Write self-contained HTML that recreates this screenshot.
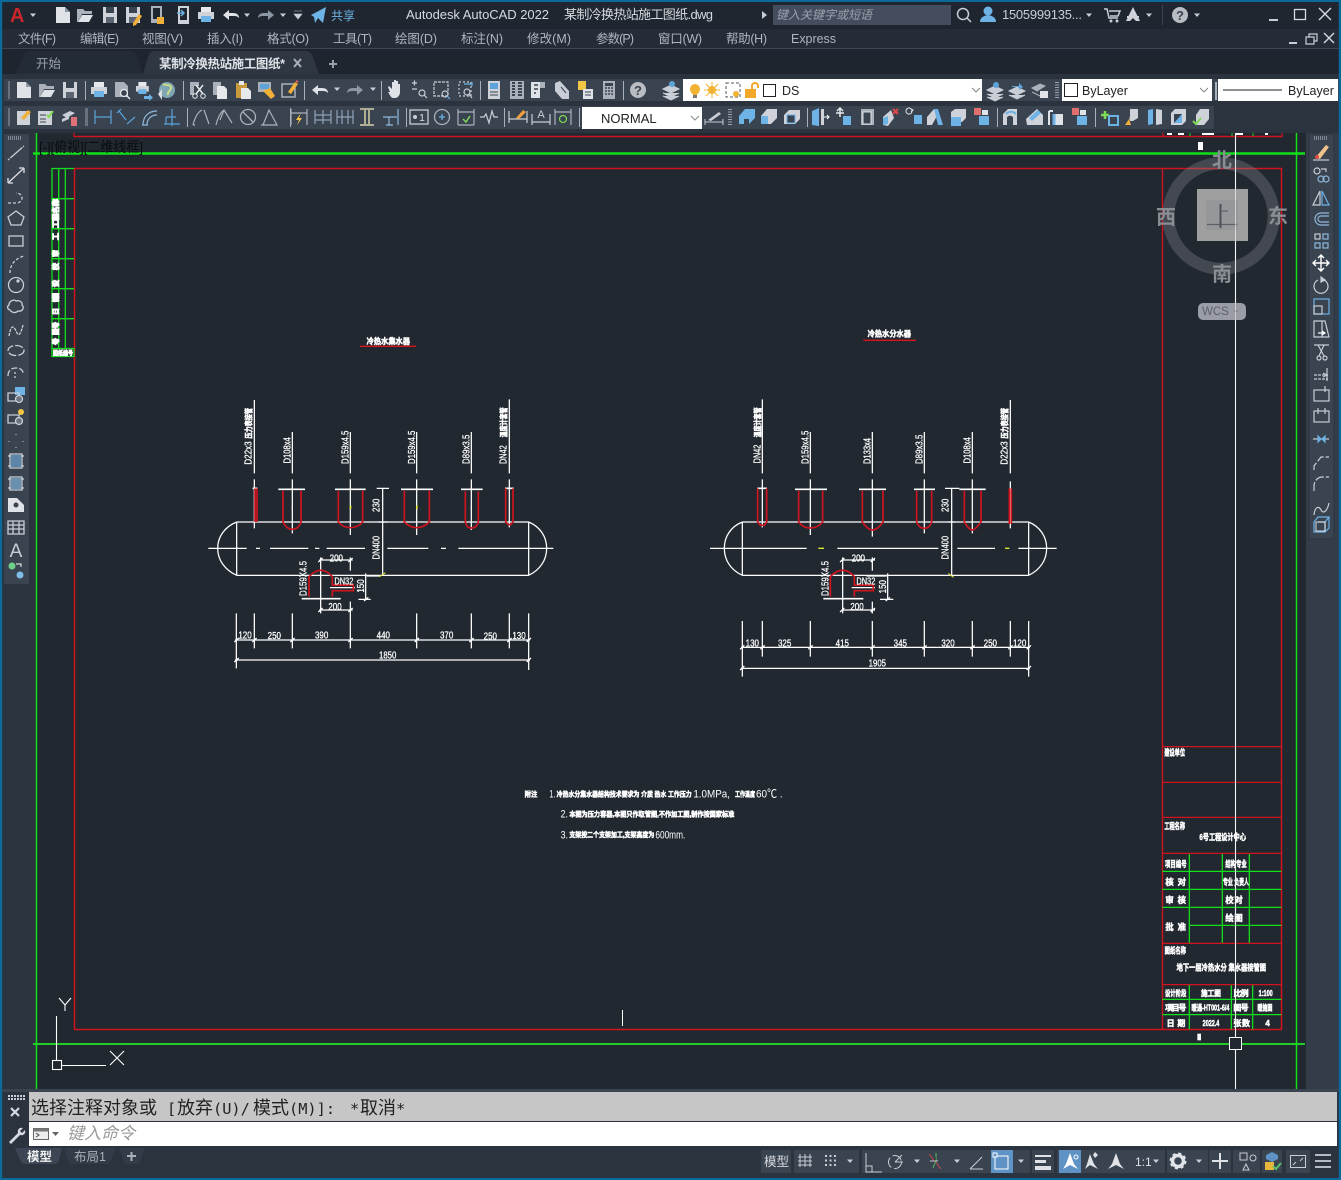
<!DOCTYPE html>
<html lang="zh"><head><meta charset="utf-8"><title>AutoCAD 2022</title>
<style>html,body{margin:0;padding:0;background:#212830;overflow:hidden}svg{display:block;font-family:"Liberation Sans","Noto Sans CJK SC",sans-serif}</style></head>
<body>
<svg xmlns="http://www.w3.org/2000/svg" width="1341" height="1180" viewBox="0 0 1341 1180">
<defs>
<g id="new"><path d="M-7-8h9l5 5v11h-14z" fill="#dfe2e6"/><path d="M2-8l5 5h-5z" fill="#8d96a3"/></g>
<g id="open"><path d="M-8 7V-6h6l2 2h7v3H-3L-7 7z" fill="#aab1bb"/><path d="M-7 7l4-7h11l-4 7z" fill="#dfe2e6"/></g>
<g id="save"><rect x="-7" y="-8" width="14" height="16" fill="#cfd3d9"/><rect x="-4" y="-8" width="8" height="6" fill="#3a4350"/><rect x="-4" y="2" width="8" height="6" fill="#5b6472"/></g>
<g id="saveas"><use href="#save"/><path d="M0 8l6-9 3 2-6 9-3 1z" fill="#f0b03a"/></g>
<g id="print"><rect x="-5" y="-8" width="10" height="5" fill="#e6e8eb"/><rect x="-8" y="-3" width="16" height="7" fill="#cfd3d9"/><rect x="-5" y="1" width="10" height="6" fill="#6db3e6"/></g>
<g id="prev"><path d="M-7-8h9l4 4v11h-13z" fill="#aab1bb"/><circle cx="2" cy="3" r="3.5" fill="#3a4350" stroke="#e6e8eb" stroke-width="1.3"/><path d="M5 6l3 3" stroke="#e6e8eb" stroke-width="1.5"/></g>
<g id="plot"><use href="#print" transform="scale(.8) translate(-2 -2)"/><path d="M0 6h5v-2l4 3.500-4 3.500v-2H0z" fill="#6db3e6"/></g>
<g id="globe"><circle r="8" fill="#7fa7b3"/><path d="M-4-6c4 2 7 0 8 3s-4 4-3 8" stroke="#c8dc8a" stroke-width="2" fill="none"/><path d="M-9 4l4-5v11z" fill="#d9dce0"/></g>
<g id="cut"><path d="M-7-8h9v4h-5v9h-4z" fill="#aab1bb"/><path d="M-1-5l7 9M6-5l-7 9" stroke="#e6e8eb" stroke-width="1.5"/><circle cx="-2" cy="6" r="2.300" fill="none" stroke="#e6e8eb"/><circle cx="6" cy="6" r="2.300" fill="none" stroke="#e6e8eb"/></g>
<g id="copy"><path d="M-7-8h8v13h-8z" fill="#aab1bb"/><path d="M-3-4h7l3 3v10H-3z" fill="#e6e8eb"/></g>
<g id="paste"><rect x="-7" y="-7" width="11" height="15" fill="#c99a3d"/><rect x="-4" y="-9" width="5" height="4" fill="#e6e8eb"/><path d="M-2-2h7l3 3v8H-2z" fill="#e6e8eb"/></g>
<g id="match"><rect x="-8" y="-8" width="13" height="10" fill="#aab1bb"/><rect x="-6" y="-6" width="9" height="5" fill="#5ba3d9"/><path d="M-3 1l7-3 5 8-4 3z" fill="#f0b03a"/></g>
<g id="mprop"><rect x="-8" y="-6" width="13" height="13" fill="none" stroke="#aab1bb" stroke-width="1.500"/><path d="M-2 2l7-10 3 2-7 10z" fill="#f0b03a"/><path d="M6-9l2 1" stroke="#e66" stroke-width="2"/></g>
<g id="undo"><path d="M-8 0l6-5v3h4c4 0 6 2 6 5-2-2-3-2-6-2h-4v4z" fill="#dfe2e6"/></g>
<g id="redo"><path d="M8 0l-6-5v3h-4c-4 0-6 2-6 5 2-2 3-2 6-2h4v4z" fill="#8d96a3"/></g>
<g id="arr"><path d="M-3-1.500h6l-3 3.500z" fill="#c9ced6"/></g>
<g id="hand"><path d="M-5 2l-2-5 1-1 3 3v-7h2v5-7h2v7-6h2v7-4h2v8c0 3-2 6-5 6h-2c-2 0-3-3-5-6z" fill="#dfe2e6"/></g>
<g id="zr" fill="none" stroke="#c9ced6" stroke-width="1.200"><path d="M-7-7h5M-4.500-9.500v5M-7-1h5"/><circle cx="3" cy="3" r="3"/><path d="M5 5l3 3"/></g>
<g id="zw" fill="none" stroke="#c9ced6" stroke-width="1.200"><rect x="-8" y="-8" width="14" height="14" stroke-dasharray="3 1"/><circle cx="3" cy="4" r="3"/><path d="M5 6l3 3" stroke="#6db3e6"/></g>
<g id="zp" fill="none" stroke="#c9ced6" stroke-width="1.200"><rect x="-7" y="-8" width="12" height="14" stroke-dasharray="2 2"/><path d="M-2-6h8M6-8v4" stroke="#6db3e6"/><circle cx="1" cy="2" r="3"/><path d="M3 4l3 4"/></g>
<g id="panel"><rect x="-6" y="-9" width="12" height="18" fill="#cfd3d9"/><rect x="-4" y="-7" width="8" height="6" fill="#5ba3d9"/><path d="M-4 2h8M-4 5h8" stroke="#3a4350"/></g>
<g id="grid"><rect x="-7" y="-9" width="14" height="18" fill="#aab1bb"/><path d="M-5-7h3M-5-4h3M-5-1h3M-5 2h3M-5 5h3M1-7h4M1-4h4M1-1h4M1 2h4M1 5h4" stroke="#3a4350" stroke-width="2"/></g>
<g id="tool"><rect x="-7" y="-8" width="9" height="16" fill="#dfe2e6"/><rect x="2" y="-8" width="5" height="6" fill="#aab1bb"/><path d="M-4-5h4M-4-1h4M-4 3h2" stroke="#3a4350" stroke-width="1.500"/></g>
<g id="sheet"><path d="M-7-7l5-2 9 10v8H0L-7 1z" fill="#c9ced6"/><path d="M-1-3l5 6" stroke="#3a4350"/></g>
<g id="mark"><rect x="-7" y="-9" width="8" height="9" fill="#f2c544"/><rect x="-2" y="-1" width="10" height="10" fill="#dfe2e6"/><path d="M0 2h6M0 5h6" stroke="#3a4350"/></g>
<g id="calc"><rect x="-6" y="-9" width="12" height="18" fill="#aab1bb"/><rect x="-4" y="-7" width="8" height="3" fill="#3a4350"/><path d="M-4-2h8M-4 1h8M-4 4h8" stroke="#3a4350" stroke-width="1.500" stroke-dasharray="2 1"/></g>
<g id="help"><circle r="8" fill="#b9bdc3"/><text y="5" text-anchor="middle" font-size="13" font-weight="700" fill="#3a4350">?</text></g>
<g id="layers"><path d="M-8-1l8-4 8 4-8 4zM-8 3l8 4 8-4M-8 6l8 4 8-4" fill="#c9ced6" stroke="#c9ced6"/><circle cx="1" cy="-6" r="3" fill="#5ba3d9"/></g>
<g id="layer2"><path d="M-8 0l8-4 8 4-8 4zM-8 4l8 4 8-4" fill="#c9ced6" stroke="#c9ced6"/><path d="M-5-5h7v-3l4 4-4 3v-3h-7" fill="#5ba3d9"/></g>
<g id="layer3"><path d="M-8-2l8-4 5 2-8 5zM-8 2l8 4" fill="#aab1bb" stroke="#aab1bb"/><rect x="0" y="1" width="8" height="7" fill="#dfe2e6"/></g>
<g id="d1"><path d="M-7-6h10l3 3v11H-7z" fill="#cfd3d9"/><path d="M-3 1l7-8 3 2-7 8z" fill="#f0b03a"/></g>
<g id="d2"><path d="M-8-6h14v14H-8z" fill="#cfd3d9"/><path d="M-6-2h6M-6 2h6M-6 5h6" stroke="#3a4350"/><path d="M1-2l2 2 4-6" stroke="#7ed957" stroke-width="2" fill="none"/></g>
<g id="d3"><path d="M-8-2l8-4 5 2-8 5zM-8 2l7-3v3l-7 3z" fill="#c9ced6"/><rect x="1" y="0" width="6" height="9" fill="#e0707a"/></g>
<g id="h1" fill="none" stroke="#5ba3d9" stroke-width="1.200"><path d="M-8-7V7M8-7V7M-8 0H8"/></g>
<g id="h2" fill="none" stroke="#5ba3d9" stroke-width="1.200"><path d="M-8-6L-1 3M0 7l8-7M-6-8l-4 4"/></g>
<g id="h3" fill="none" stroke="#8fb9dc" stroke-width="1.200"><path d="M-7 8c0-8 5-14 14-14M-3 8c0-6 4-10 10-10"/><path d="M-8 8h6"/></g>
<g id="h4" fill="none" stroke="#5ba3d9" stroke-width="1.200"><path d="M-8 7H8M0-8V9M-6 0H4M-6 0V7"/></g>
<g id="a1" fill="none" stroke="#aab1bb" stroke-width="1.200"><path d="M-8 8C-6 0-3-5 1-7M-8 8h2M3-7l5 14"/></g>
<g id="a2" fill="none" stroke="#aab1bb" stroke-width="1.200"><path d="M-8 8C-6 0-3-5 0-7L8 6M0-7l-4 10"/></g>
<g id="a3" fill="none" stroke="#aab1bb" stroke-width="1.300"><circle r="7.500"/><path d="M-5-5L5 5"/></g>
<g id="a4" fill="none" stroke="#aab1bb" stroke-width="1.200"><path d="M-8 8H8L0-7-6 8"/></g>
<g id="b1" fill="none" stroke="#aab1bb" stroke-width="1.200"><path d="M-8-8V8M8-8V8M-8-4H8"/><path d="M2-4L-3 3h3l-2 5 5-7H0z" fill="#f2c544" stroke="none"/></g>
<g id="b2" fill="none" stroke="#8fa3b9" stroke-width="1.200"><path d="M-8-7V7M0-7V7M8-7V7M-8-2H8M-8 3H8"/></g>
<g id="b3" fill="none" stroke="#8fa3b9" stroke-width="1.200"><path d="M-8-7V7M-3-7V7M3-7V7M8-7V7M-8 0H8"/></g>
<g id="b4" fill="none" stroke="#d8d2a8" stroke-width="1.500"><path d="M-7-8H7M-7 8H7M-2-7V7M2-7V7"/></g>
<g id="b5" fill="none" stroke="#8fb9dc" stroke-width="1.200"><path d="M-8 0H6M7-8V8M-2 0v8M-5 8H2"/></g>
<g id="t1"><rect x="-9" y="-7" width="18" height="14" fill="none" stroke="#c9ced6" stroke-width="1.300"/><text x="3" y="4" font-size="10" fill="#dfe2e6" text-anchor="middle">1</text><circle cx="-4" cy="0" r="2" fill="#c9ced6"/></g>
<g id="t2" fill="none" stroke="#aab1bb" stroke-width="1.300"><circle r="7.500"/><path d="M-3 0h6M0-3v6" stroke="#6db3e6"/></g>
<g id="t3" fill="none" stroke="#aab1bb" stroke-width="1.200"><path d="M-8-8V8M8-8V8M-8-5H8M-8 8H8"/><path d="M-3 2l3 3 4-6" stroke="#7ed957" stroke-width="1.500"/></g>
<g id="t4" fill="none" stroke="#c9ced6" stroke-width="1.200"><path d="M-9 0h4l2-3 3 9 3-12 2 6h4"/></g>
<g id="u1" fill="none" stroke="#c9ced6" stroke-width="1.200"><path d="M-9-6V6M9-6V6M-9 2H9"/><path d="M-2 1l7-8 3 2-7 7z" fill="#f0a03a" stroke="none"/></g>
<g id="u2" fill="none" stroke="#c9ced6" stroke-width="1.200"><path d="M-9-3V8M9-3V8M-9 5H9"/><text x="0" y="1" font-size="11" stroke="none" fill="#c9ced6" text-anchor="middle">A</text></g>
<g id="u3" fill="none" stroke="#aab1bb" stroke-width="1.200"><path d="M-8-8V8M8-8V8M-8-5H8"/><circle cy="2" r="3.500" stroke="#7ed957"/></g>
<g id="dimed"><path d="M-9 1V7M9 1V7M-9 4H9" stroke="#c9ced6" fill="none"/><path d="M-6 2L5-6l2 2L-3 3z" fill="#c9ced6"/></g>
<g id="c1"><path d="M-8 7V-1l6-7h10v9l-6 6z" fill="#6db3e6"/><path d="M-3 7V2h5v5z" fill="#3a4350"/></g>
<g id="c2"><path d="M-8 7V-1l6-7h10v9l-6 6z" fill="#cfd3d9"/><path d="M-8 7V-1h7v8z" fill="#6db3e6"/></g>
<g id="c3"><path d="M-8 7V-2l5-5H8V2L3 7z" fill="#cfd3d9"/><rect x="-5" y="-2" width="8" height="8" fill="#3a4350" stroke="#6db3e6"/></g>
<g id="e1"><path d="M-8 8V-6l7-3V9z" fill="#6db3e6"/><path d="M1-8h3v16H1z" fill="#cfd3d9"/><path d="M4 0h5M7-2l2 2-2 2" stroke="#fff" fill="none"/></g>
<g id="e2"><path d="M-7-4H1M-3-8V0M-6-6l3-3 3 3" stroke="#e6e8eb" fill="none" stroke-width="1.500"/><rect x="0" y="-1" width="8" height="9" fill="#6db3e6"/></g>
<g id="e3"><rect x="-6" y="-8" width="13" height="16" fill="#aab1bb"/><rect x="-4" y="-5" width="8" height="12" fill="#3a4350" stroke="#dfe2e6"/></g>
<g id="e4"><path d="M-7 8V0l8-7 3 8-6 8z" fill="#cfd3d9"/><path d="M-7 8V1l5-2v8z" fill="#6db3e6"/><path d="M3-8l5 5M8-8l-5 5" stroke="#e04848" stroke-width="2"/></g>
<g id="e5"><path d="M-8-6a3 3 0 1 1 0 .1M-3-8l2 1-2 2" stroke="#dfe2e6" fill="none"/><rect x="0" y="-2" width="8" height="9" fill="#6db3e6"/></g>
<g id="e6"><path d="M-8 8V0l7-8 4 5-6 11z" fill="#cfd3d9"/><path d="M-1-8l4 0 5 16H3z" fill="#6db3e6"/></g>
<g id="e7"><path d="M-8 4V-5l4-3h11v9l-4 4z" fill="#cfd3d9"/><path d="M-8 9V0h10v9z" fill="#6db3e6"/></g>
<g id="e8"><rect x="-8" y="-9" width="7" height="7" fill="#e07070"/><rect x="0" y="-7" width="6" height="5" fill="#dfe2e6"/><rect x="-3" y="-1" width="10" height="9" fill="#6db3e6"/></g>
<g id="f1"><path d="M-7 8V-3l5-5h9V8H3V1c0-3-6-3-6 0v7z" fill="#cfd3d9"/><path d="M-4-3c3-3 7-3 10 0" stroke="#6db3e6" fill="none" stroke-width="2"/></g>
<g id="f2"><path d="M-8 2L3-8l6 6V8H-7z" fill="#cfd3d9"/><path d="M-5 1L4-7l3 3-9 8z" fill="#6db3e6"/></g>
<g id="f3"><path d="M-3-3h9v11h-9z" fill="#dfe2e6"/><path d="M-8 8V-6M-8-6h4" stroke="#dfe2e6" stroke-width="2" fill="none"/><path d="M-3-3v11" stroke="#6db3e6" stroke-width="3"/></g>
<g id="g1"><path d="M-8-8V0M-12-4h8" stroke="#7ed957" stroke-width="2.500" transform="translate(2 2)"/><rect x="-2" y="-1" width="9" height="9" fill="#3a4350" stroke="#6db3e6" stroke-width="2"/></g>
<g id="g2"><path d="M-1-8h8v9L2 4H-1z" fill="#cfd3d9"/><path d="M-2 2l-4 6h6z" fill="#f0b03a"/><path d="M-1 0v3" stroke="#c9ced6"/></g>
<g id="g3"><path d="M-7-7l5-1v15l-5 1z" fill="#6db3e6"/><path d="M1-8l6 1v14l-6 1z" fill="#cfd3d9"/></g>
<g id="g4"><path d="M-7-4l4-4H8V4L4 8H-7z" fill="#cfd3d9"/><rect x="-4" y="-3" width="8" height="9" fill="#3a4350"/><path d="M-4 6l8-9v9z" fill="#6db3e6"/></g>
<g id="g5"><path d="M-5-2l4-6H8V2L3 8H-5z" fill="#cfd3d9"/><path d="M-8 4l3 3 5-6" stroke="#7ed957" stroke-width="2" fill="none"/></g>
<g id="gr"><path d="M0-8v16" stroke="#9aa3af" stroke-width="2" stroke-dasharray="1 1.500"/><path d="M2-8v16" stroke="#9aa3af" stroke-width="2" stroke-dasharray="1 1.500"/></g>
</defs>

<rect width="1341" height="1180" fill="#212830"/>
<!-- chrome -->
<rect width="1341" height="29" fill="#1f2630"/>
<rect y="29" width="1341" height="19" fill="#252c37"/>
<rect y="48" width="1341" height="1" fill="#3d4552"/>
<rect y="49" width="1341" height="26" fill="#1e252e"/>
<path d="M16 74l8-20q2-3 6-3h100q5 0 7 4l6 19z" fill="#232b36"/>
<path d="M143 74l6-20q2-3 6-3h150q5 0 7 4l7 19z" fill="#2f3743"/>
<rect y="74" width="1341" height="59" fill="#2b333f"/>
<text x="36" y="68" font-size="12.500" fill="#9aa1ab">开始</text>
<text x="159" y="68" font-size="12.500" font-weight="700" fill="#dfe2e6" textLength="126">某制冷换热站施工图纸*</text>
<path d="M294 59l7 8M301 59l-7 8" stroke="#aab1bb" stroke-width="2"/>
<path d="M329 64h8M333 60v8" stroke="#9aa1ab" stroke-width="2"/>
<!-- title -->
<text x="10" y="22" font-size="20" font-weight="700" fill="#c8262a">A</text>
<use href="#arr" x="33" y="15"/>
<use href="#new" x="63" y="15"/><use href="#open" x="85" y="15"/><use href="#save" x="110" y="15"/><use href="#saveas" x="133" y="15"/>
<g transform="translate(157 15)"><rect x="-6" y="-9" width="11" height="17" fill="#aab1bb"/><rect x="-4" y="-7" width="7" height="11" fill="#1f2630"/><rect x="0" y="2" width="7" height="7" fill="#f0b03a"/></g>
<g transform="translate(183 15)"><rect x="-5" y="-9" width="11" height="18" fill="#cfd3d9"/><rect x="-3" y="-7" width="7" height="12" fill="#1f2630"/><path d="M-6-2h6M-2-5l3 3-3 3" stroke="#6db3e6" fill="none" stroke-width="1.500"/></g>
<use href="#print" x="206" y="15"/><use href="#undo" x="231" y="15"/><use href="#arr" x="247" y="15"/><use href="#redo" x="266" y="15"/><use href="#arr" x="283" y="15"/>
<path d="M294 11h8M294 14h8l-4 5z" fill="#c9ced6" stroke="#c9ced6" stroke-width=".6"/>
<path d="M311 15L326 7l-3 16-5-5-3 5-1-6z" fill="#6db3e6"/>
<text x="331" y="20" font-size="12" fill="#6db3e6">共享</text>
<text x="406" y="19" font-size="13" fill="#d6d9de" textLength="143">Autodesk AutoCAD 2022</text>
<text x="564" y="19" font-size="13" fill="#d6d9de" textLength="149">某制冷换热站施工图纸.dwg</text>
<path d="M762 11l5 4-5 4z" fill="#c9ced6"/>
<rect x="773" y="5" width="178" height="20" fill="#434d5e"/>
<text x="776" y="19" font-size="12" font-style="italic" fill="#9aa1ab">键入关键字或短语</text>
<circle cx="963" cy="14" r="5.500" fill="none" stroke="#c9ced6" stroke-width="1.500"/><path d="M967 18l4 4" stroke="#c9ced6" stroke-width="1.500"/>
<circle cx="988" cy="11" r="4.500" fill="#6db3e6"/><path d="M980 22c0-9 16-9 16 0z" fill="#6db3e6"/>
<text x="1002" y="19" font-size="13" fill="#c9ced6" textLength="80">1505999135...</text>
<use href="#arr" x="1089" y="15"/>
<path d="M1104 9h3l2 9h9M1109 11h11l-2 5h-8" stroke="#c9ced6" fill="none" stroke-width="1.500"/><circle cx="1111" cy="21" r="1.500" fill="#c9ced6"/><circle cx="1117" cy="21" r="1.500" fill="#c9ced6"/>
<path d="M1133 7l7 14h-4l-3-3-3 3h-4z" fill="#cfd3d9"/><path d="M1127 17h12" stroke="#cfd3d9" stroke-width="2"/>
<use href="#arr" x="1149" y="15"/><rect x="1162" y="5" width="1" height="20" fill="#3d4552"/>
<use href="#help" x="1180" y="15"/><use href="#arr" x="1197" y="15"/>
<path d="M1269 20h9" stroke="#c9ced6" stroke-width="2"/><rect x="1294.500" y="9.500" width="11" height="10" fill="none" stroke="#d6d9de" stroke-width="1.300"/><path d="M1319 8l12 12M1331 8l-12 12" stroke="#d6d9de" stroke-width="1.400"/>
<!-- menu -->
<g font-size="12.500" fill="#b0b6bf">
<text x="18" y="43" textLength="38">文件(F)</text><text x="80" y="43" textLength="39">编辑(E)</text><text x="142" y="43" textLength="41">视图(V)</text><text x="207" y="43" textLength="36">插入(I)</text><text x="267" y="43" textLength="42">格式(O)</text><text x="333" y="43" textLength="39">工具(T)</text><text x="395" y="43" textLength="42">绘图(D)</text><text x="461" y="43" textLength="42">标注(N)</text><text x="527" y="43" textLength="44">修改(M)</text><text x="596" y="43" textLength="38">参数(P)</text><text x="658" y="43" textLength="44">窗口(W)</text><text x="726" y="43" textLength="41">帮助(H)</text><text x="791" y="43" textLength="45">Express</text></g>
<path d="M1289 43h8" stroke="#c9ced6" stroke-width="2"/><path d="M1306 37h8v7h-8zM1309 37v-3h8v7h-3" fill="none" stroke="#c9ced6" stroke-width="1.200"/><path d="M1324 33l10 10M1334 33l-10 10" stroke="#d6d9de" stroke-width="1.400"/>
<!-- toolbars -->
<rect x="4" y="79" width="1335" height="22" fill="#3a4350"/>
<rect x="4" y="106" width="1210" height="23" fill="#3a4350"/>
<rect x="8" y="81" width="2" height="18" fill="#7c8592" opacity=".7"/>
<rect x="8" y="108" width="2" height="18" fill="#7c8592" opacity=".7"/>
<rect x="85" y="108" width="3" height="18" fill="#7c8592" opacity=".7"/>
<g fill="#aab1bb"><rect x="85" y="81" width="1" height="19"/><rect x="183" y="81" width="1" height="19"/><rect x="304" y="81" width="1" height="19"/><rect x="381" y="81" width="1" height="19"/><rect x="480" y="81" width="1" height="19"/><rect x="623" y="81" width="1" height="19"/><rect x="187" y="108" width="1" height="19"/><rect x="290" y="108" width="1" height="19"/><rect x="406" y="108" width="1" height="19"/><rect x="504" y="108" width="1" height="19"/><rect x="579" y="108" width="1" height="19"/><rect x="807" y="108" width="1" height="19"/><rect x="997" y="108" width="1" height="19"/><rect x="1095" y="108" width="1" height="19"/><rect x="1215" y="82" width="2" height="18"/></g>
<use href="#new" x="24" y="90"/><use href="#open" x="47" y="90"/><use href="#save" x="70" y="90"/><use href="#print" x="99" y="90"/><use href="#prev" x="122" y="90"/><use href="#plot" x="144" y="90"/><use href="#globe" x="167" y="90"/><use href="#cut" x="197" y="90"/><use href="#copy" x="220" y="90"/><use href="#paste" x="243" y="90"/><use href="#match" x="266" y="90"/><use href="#mprop" x="290" y="90"/><use href="#undo" x="320" y="90"/><use href="#arr" x="337" y="89"/><use href="#redo" x="355" y="90"/><use href="#arr" x="373" y="89"/><use href="#hand" x="395" y="90"/><use href="#zr" x="419" y="90"/><use href="#zw" x="442" y="90"/><use href="#zp" x="466" y="90"/><use href="#panel" x="494" y="90"/><use href="#grid" x="517" y="90"/><use href="#tool" x="538" y="90"/><use href="#sheet" x="562" y="90"/><use href="#mark" x="585" y="90"/><use href="#calc" x="609" y="90"/><use href="#help" x="638" y="90"/><use href="#layers" x="671" y="90"/>
<rect x="683" y="79" width="299" height="22" fill="#fff"/>
<path d="M690 89a5 5 0 1 1 10 0c0 3-2 4-3 6h-4c-1-2-3-3-3-6z" fill="#f2b233"/><rect x="693" y="95" width="4" height="3" fill="#777"/>
<circle cx="712" cy="90" r="4" fill="#f2b233"/><path d="M712 82v16M704 90h16M706 84l12 12M718 84l-12 12" stroke="#f2b233"/>
<rect x="726" y="83" width="14" height="14" fill="none" stroke="#556" stroke-dasharray="3 2"/><circle cx="736" cy="94" r="3" fill="#f2b233"/>
<rect x="745" y="89" width="11" height="9" fill="#f2a62a"/><path d="M752 89v-3a3 3 0 0 1 6 0v2" fill="none" stroke="#f2a62a" stroke-width="2"/>
<rect x="763.500" y="84.500" width="12" height="12" fill="#fff" stroke="#222"/>
<text x="782" y="95" font-size="12.500" fill="#222">DS</text>
<path d="M972 88l4 4 4-4" fill="none" stroke="#888"/>
<use href="#layers" x="995" y="91"/><use href="#layer2" x="1017" y="91"/><use href="#layer3" x="1040" y="90"/>
<use href="#gr" x="1056" y="90"/>
<rect x="1062" y="79" width="150" height="22" fill="#fff"/><rect x="1064.500" y="83.500" width="13" height="13" fill="#fff" stroke="#222"/>
<text x="1082" y="95" font-size="12.500" fill="#222">ByLayer</text><path d="M1200 88l4 4 4-4" fill="none" stroke="#888"/>
<rect x="1218" y="79" width="120" height="22" fill="#fff"/><path d="M1223 90h59" stroke="#222"/><text x="1288" y="95" font-size="12.500" fill="#222">ByLayer</text>
<!-- row 2 -->
<use href="#d1" x="24" y="117"/><use href="#d2" x="46" y="117"/><use href="#d3" x="70" y="117"/>
<use href="#h1" x="103" y="117"/><use href="#h2" x="127" y="117"/><use href="#h3" x="150" y="117"/><use href="#h4" x="172" y="117"/>
<use href="#a1" x="201" y="117"/><use href="#a2" x="224" y="117"/><use href="#a3" x="248" y="117"/><use href="#a4" x="269" y="117"/>
<use href="#b1" x="299" y="117"/><use href="#b2" x="323" y="117"/><use href="#b3" x="345" y="117"/><use href="#b4" x="367" y="117"/><use href="#b5" x="391" y="117"/>
<use href="#t1" x="419" y="117"/><use href="#t2" x="442" y="117"/><use href="#t3" x="466" y="117"/><use href="#t4" x="489" y="117"/>
<use href="#u1" x="518" y="117"/><use href="#u2" x="541" y="117"/><use href="#u3" x="563" y="117"/>
<rect x="582" y="107" width="120" height="22" fill="#fff"/><text x="601" y="123" font-size="13" fill="#222">NORMAL</text><path d="M691 116l4 4 4-4" fill="none" stroke="#888"/>
<use href="#dimed" x="714" y="118"/><use href="#gr" x="729" y="117"/>
<use href="#c1" x="747" y="117"/><use href="#c2" x="769" y="117"/><use href="#c3" x="792" y="117"/>
<use href="#e1" x="820" y="117"/><use href="#e2" x="843" y="117"/><use href="#e3" x="867" y="117"/><use href="#e4" x="890" y="117"/><use href="#e5" x="914" y="117"/><use href="#e6" x="935" y="117"/><use href="#e7" x="959" y="117"/><use href="#e8" x="982" y="117"/>
<use href="#f1" x="1010" y="117"/><use href="#f2" x="1034" y="117"/><use href="#f3" x="1057" y="117"/><use href="#e8" x="1080" y="117"/>
<use href="#g1" x="1111" y="117"/><use href="#g2" x="1131" y="117"/><use href="#g3" x="1155" y="117"/><use href="#g4" x="1178" y="117"/><use href="#g5" x="1201" y="117"/>

<!-- side panels -->
<rect x="0" y="133" width="36" height="957" fill="#2b333f"/>
<rect x="1306" y="133" width="35" height="957" fill="#333c49"/>
<rect x="4" y="134" width="25" height="450" fill="#3a4350"/>
<rect x="1309" y="134" width="25" height="405" fill="#3a4350" stroke="#2b333f"/>
<path d="M8 137h13M8 139h13M1314 137h13M1314 139h13" stroke="#c9ced6" stroke-dasharray="1 1"/>
<!-- left tools -->
<g fill="none" stroke="#c9ced6" stroke-width="1.300" transform="translate(16 0)">
<path d="M-8 160L8 146" stroke-dasharray="2 1 16 1 2 20"/><path d="M-7 182L7 169M-8 183h5M-8 183v-5M8 168h-5M8 168v5" stroke="#dfe2e6"/>
<path d="M-8 203h8c8 0 8-10 0-10" stroke-dasharray="3 2"/>
<path d="M0 211l8 6-3 8h-10l-3-8z"/><rect x="-7" y="236" width="14" height="10"/>
<path d="M-6 273C-6 264 0 258 8 256" stroke-dasharray="3 2"/>
<circle cy="285" r="7.500"/><circle cx="2" cy="281" r="1" fill="#c9ced6"/>
<path d="M-7 305c0-4 5-6 7-4 3-1 7 1 6 4 3 3 0 7-4 6-3 3-7 1-8-1-3-1-3-4-1-5z"/>
<path d="M-7 336c2-12 5-10 7-5s4 6 7-6" stroke-dasharray="3 1"/>
<ellipse cy="350.500" rx="8" ry="5" stroke-dasharray="8 2"/><path d="M-8 376c0-6 4-8 8-8s7 2 7 5" stroke-dasharray="6 2"/><path d="M-1 372v8" stroke-dasharray="2 2"/>
<rect x="-7" y="395" width="10" height="8" fill="#6db3e6" stroke="none" transform="translate(6 -8)"/><path d="M-8 393h11v8h-11z"/><circle cx="3" cy="399" r="3.500" fill="#6c7582"/>
<path d="M-8 415h11v8h-11z"/><circle cx="3" cy="421" r="3.500" fill="#6c7582"/><circle cx="5" cy="412" r="3" fill="#f2c544" stroke="none"/>
<path d="M0 434v.5M-7 441v.5M7 441v.5M0 447v.5" stroke-width="2"/>
<path d="M-6 454h12v14h-12zM-8 456h16M-8 466h16" /><rect x="-5" y="455" width="10" height="12" fill="#5d87a8" stroke="none"/>
<path d="M-6 477h12v13h-12zM-8 479h16M-8 488h16"/><rect x="-5" y="478" width="10" height="11" fill="#6a90b0" stroke="none"/>
<path d="M-8 498h9l7 7v7h-16z" fill="#dfe2e6" stroke="none"/><circle cy="505" r="2.500" fill="#3a4350" stroke="none"/>
<path d="M-8 521h16v13h-16zM-8 525h16M-8 529h16M-3 521v13M3 521v13" /></g>
<text x="16" y="557" text-anchor="middle" font-size="19" fill="#c9ced6">A</text>
<circle cx="12" cy="566" r="3.500" fill="#6fd08a"/><circle cx="20" cy="575" r="3.500" fill="#7fbde8"/><path d="M16 564h5v3" stroke="#fff" fill="none"/>
<!-- right tools -->
<g fill="none" stroke="#c9ced6" stroke-width="1.200" transform="translate(1321 0)">
<path d="M-6 158L5 145l3 2-9 12z" fill="#f2c28b" stroke="none"/><circle cx="-4" cy="157" r="2" fill="#e04848" stroke="none"/><path d="M-8 160H8"/>
<circle cx="-4" cy="171" r="3"/><path d="M0 169h5v3"/><circle cx="0" cy="179" r="3" stroke="#8fb9dc"/><circle cx="5" cy="179" r="3" stroke="#8fb9dc"/>
<path d="M-1 191v14h-7z"/><path d="M1 191v14h7z" stroke="#6db3e6"/>
<path d="M8 213h-8a6 6 0 0 0 0 12h8M8 216h-8a3 3 0 0 0 0 6h8" stroke="#8fb9dc"/>
<rect x="-6" y="234" width="5" height="5"/><rect x="2" y="234" width="5" height="5" stroke="#8fb9dc"/><rect x="-6" y="243" width="5" height="5" stroke="#8fb9dc"/><rect x="2" y="243" width="5" height="5" stroke="#8fb9dc"/>
<path d="M-7 263H7M0 256v14M-3 258l3-3 3 3M-3 268l3 3 3-3M-5 260l-3 3 3 3M5 260l3 3-3 3" stroke="#fff" stroke-width="1.400"/>
<path d="M3 280a7 7 0 1 1-6 0" /><path d="M0 277l4 3-4 2z" fill="#c9ced6"/>
<rect x="-7" y="299" width="15" height="15" stroke="#6db3e6"/><rect x="-7" y="306" width="8" height="8"/>
<path d="M-7 321H1V337H-7zM1 321h3l4 16H1" /><path d="M-3 333h6M1 331l3 2-3 2" stroke="#fff"/>
<path d="M-7 345H8M-3 345l6 11M3 345l-5 11" /><circle cx="-2" cy="358" r="2"/><circle cx="4" cy="358" r="2"/>
<path d="M-7 375H7M-7 379H7" stroke-dasharray="3 1"/><path d="M6 368v13M2 373l4 2-4 2"/>
<rect x="-7" y="390" width="15" height="11"/><path d="M4 386v6" /><rect x="-7" y="411" width="15" height="11"/><path d="M-3 408v6M4 408v6"/>
<path d="M-8 439H8" /><path d="M-3 436l3 3-3 3zM4 436l-3 3 3 3z" fill="#6db3e6" stroke="#6db3e6"/>
<path d="M-7 470v-4l7-9h8" stroke-dasharray="8 2"/><path d="M-7 491v-5c0-5 4-9 8-9h7" stroke-dasharray="9 2"/>
<path d="M-7 515c1-9 5-9 7-5s6 2 8-7"/>
<path d="M-7 522l4-5H8v11l-4 4H-7zM-3 522h7v10M4 522l4-5" stroke="#6db3e6"/><rect x="-5" y="522" width="9" height="9" stroke="#fff" stroke-width=".8"/></g>

<!-- DRAWING -->
<g fill="none">
<path d="M74 136.500H1282" stroke="#d0141e" stroke-width="1.400"/><path d="M74 133v4M1163 133v4M1282 133v4" stroke="#d0141e" stroke-width="1.300"/>
<path d="M1190 133v3M1232 133v3M1253 133v3" stroke="#14d81e"/>
<rect x="74.500" y="168.500" width="1207" height="861" stroke="#d0141e" stroke-width="1.500"/>
<path d="M1162.500 168V1029" stroke="#d0141e" stroke-width="1.400"/>
<path d="M33 153.500H1305" stroke="#10e01a" stroke-width="2.600"/>
<path d="M33 1044H1305" stroke="#22cc2a" stroke-width="1.900"/>
<path d="M36.500 133V1089" stroke="#14e01e" stroke-width="1.500"/>
<path d="M1296.500 133V1089" stroke="#14e01e" stroke-width="1.500"/>
</g>
<g fill="#fff"><rect x="1167" y="133" width="5" height="2"/><rect x="1178" y="133" width="6" height="2"/><rect x="1202" y="133" width="12" height="2"/><rect x="1235" y="133" width="8" height="2"/><rect x="1265" y="133" width="3" height="2"/><rect x="1198" y="142" width="5" height="8"/></g>
<text x="39" y="152" font-size="14" fill="#0a0d10" textLength="104" lengthAdjust="spacingAndGlyphs">[-][俯视][二维线框]</text>
<!-- left side table -->
<g fill="none" stroke="#14e01e" stroke-width="1.300"><path d="M52 168.500H74M52 198.700H74M52 228.700H74M52 258.700H74M52 288.700H74M52 318.700H74M52 348.500H74M52 356.500H74M52 168V357M58.700 168V348M65.300 168V348M74 348V357"/></g>
<g fill="#fff" stroke="#fff" stroke-width="1" font-size="7" font-weight="700">
<text transform="translate(58 228) rotate(-90)" textLength="29" lengthAdjust="spacingAndGlyphs">工程名称</text>
<text transform="translate(58 240) rotate(-90)">工</text>
<text transform="translate(58 257) rotate(-90)">审</text>
<text transform="translate(58 270) rotate(-90)">校</text>
<text transform="translate(58 287) rotate(-90)">设</text>
<text transform="translate(58 302) rotate(-90)" textLength="9" lengthAdjust="spacingAndGlyphs">制图</text>
<text transform="translate(58 315) rotate(-90)">日</text>
<text transform="translate(58 335) rotate(-90)" textLength="13" lengthAdjust="spacingAndGlyphs">图号</text>
<text transform="translate(58 345) rotate(-90)">号</text>
<text x="53" y="355" stroke-width=".6" font-size="6.500" textLength="20" lengthAdjust="spacingAndGlyphs">图纸编号</text></g>

<!-- left manifold -->
<g transform="translate(200 320) scale(.33333)">
<g fill="none" stroke="#fff" stroke-width="3.800">
<path d="M110 606H986M110 766H986M110 606V766M986 606V766M110 606C75 620 53 650 53 685S75 750 110 766M986 606C1020 620 1040 650 1040 685S1020 750 986 766"/>
<path d="M25 685H140M168 685H180M210 685H325M345 685H358M380 685H495M562 685H685M723 685H738M775 685H1060"/>
<path d="M163 240V460M277 336V460M451 336V460M650 336V460M814 336V460M928 238V460M163 478V625M277 478V640M451 478V645M650 478V645M814 478V630M928 478V622"/>
<path stroke-width="5" d="M235 508H315M405 508H497M603 508H699M783 508H848M915 505H941M158 505H172"/>
<path d="M548 505V768M530 505H567M535 606H565"/>
<path stroke-width="5" d="M305 836H422"/>
<path d="M362 712V880M358 720H458M358 870H458M451 712V752M451 845V880M497 760V838M475 838H512M390 803H465M500 768H540"/>
<path d="M109 880V1045M986 880V1050M163 880V985M277 880V985M451 880V985M650 880V985M814 880V985M928 880V985M105 960H990M105 1020H990"/>
<path d="M103 966L116 954M157 966L170 954M271 966L284 954M445 966L458 954M644 966L657 954M808 966L821 954M922 966L935 954M980 966L993 954M103 1026L116 1014M980 1026L993 1014M492 843L505 832M355 726L368 714M445 726L458 714M355 876L368 864M445 876L458 864"/>
</g>
<path d="M538 770l10-6 8-6" stroke="#e8e83a" stroke-width="3" fill="none"/>
<g fill="none" stroke="#d0141e" stroke-width="5">
<path d="M165 505V606M171 505V606" /><path d="M249 512V606C256 620 265 628 277 628S298 620 303 606V512"/>
<path d="M415 512V606C425 618 438 623 451 623S478 618 488 606V512"/><path d="M613 512V606C625 618 637 623 650 623S676 618 688 606V512"/>
<path d="M796 514V606C800 620 805 624 814 624S831 620 835 606V514"/><path d="M917 505V606L925 614H932L939 606V505"/>
<path d="M327 830V770C340 756 350 751 362 751S385 756 397 770"/><path d="M397 830V812H460V795H397V770"/>
</g>
<g fill="#f0f0e0"><rect x="449" y="557" width="5" height="10" fill="#e8e83a"/><rect x="648" y="557" width="5" height="10" fill="#e8e83a"/><rect x="275" y="558" width="4" height="8"/><rect x="812" y="558" width="4" height="8"/></g>
<g fill="#fff" font-size="30" stroke="#fff" stroke-width=".8">
<text x="115" y="955" textLength="40" lengthAdjust="spacingAndGlyphs">120</text><text x="203" y="957" textLength="40" lengthAdjust="spacingAndGlyphs">250</text><text x="345" y="955" textLength="40" lengthAdjust="spacingAndGlyphs">390</text><text x="530" y="955" textLength="40" lengthAdjust="spacingAndGlyphs">440</text><text x="720" y="955" textLength="40" lengthAdjust="spacingAndGlyphs">370</text><text x="851" y="959" textLength="40" lengthAdjust="spacingAndGlyphs">250</text><text x="937" y="957" textLength="40" lengthAdjust="spacingAndGlyphs">130</text><text x="537" y="1016" textLength="52" lengthAdjust="spacingAndGlyphs">1850</text>
<text x="389" y="724" textLength="40" lengthAdjust="spacingAndGlyphs">200</text><text x="385" y="870" textLength="40" lengthAdjust="spacingAndGlyphs">200</text><text x="403" y="793" textLength="57" lengthAdjust="spacingAndGlyphs">DN32</text>
<text transform="translate(538 576) rotate(-90)" textLength="40" lengthAdjust="spacingAndGlyphs">230</text><text transform="translate(538 718) rotate(-90)" textLength="70" lengthAdjust="spacingAndGlyphs">DN400</text><text transform="translate(492 818) rotate(-90)" textLength="40" lengthAdjust="spacingAndGlyphs">150</text><text transform="translate(319 828) rotate(-90)" textLength="105" lengthAdjust="spacingAndGlyphs">D159X4.5</text>
<text transform="translate(155 434) rotate(-90)" textLength="70" lengthAdjust="spacingAndGlyphs">D22x3</text>
<text transform="translate(271 430) rotate(-90)" textLength="78" lengthAdjust="spacingAndGlyphs">D108x4</text><text transform="translate(445 432) rotate(-90)" textLength="100" lengthAdjust="spacingAndGlyphs">D159x4.5</text><text transform="translate(645 432) rotate(-90)" textLength="100" lengthAdjust="spacingAndGlyphs">D159x4.5</text><text transform="translate(808 432) rotate(-90)" textLength="88" lengthAdjust="spacingAndGlyphs">D89x3.5</text>
<text transform="translate(920 432) rotate(-90)" textLength="56" lengthAdjust="spacingAndGlyphs">DN42</text>
<g font-weight="700" font-size="24" stroke-width="1.500"><text transform="translate(155 356) rotate(-90)" textLength="92" lengthAdjust="spacingAndGlyphs">压力表接管</text><text transform="translate(920 352) rotate(-90)" textLength="90" lengthAdjust="spacingAndGlyphs">温度计套管</text>
<text x="500" y="72" textLength="130" lengthAdjust="spacingAndGlyphs">冷热水集水器</text></g></g>
<path d="M480 79H648" stroke="#d8141e" stroke-width="4"/>
</g>

<!-- right manifold -->
<g transform="translate(700 320) scale(.33333)">
<g fill="none" stroke="#fff" stroke-width="3.800">
<path d="M127 606H986M127 766H986M127 606V766M986 606V766M127 606C92 620 73 650 73 685S92 750 127 766M986 606C1020 620 1040 650 1040 685S1020 750 986 766"/>
<path d="M30 685H320M412 685H715M772 685H885M955 685H1070"/>
<path d="M187 238V460M331 336V460M517 336V460M673 336V460M817 336V460M931 240V460M187 478V622M331 478V645M517 478V650M673 478V640M817 478V640M931 484V625"/>
<path stroke-width="5" d="M172 505H201M285 508H381M477 508H558M642 508H705M778 508H857"/>
<path d="M755 505V768M735 505H778M745 606H765"/>
<path stroke-width="5" d="M370 836H490"/>
<path d="M428 712V880M425 720H525M425 870H525M517 712V752M517 845V880M563 760V838M540 838H580M455 803H525M500 768H560"/>
<path d="M127 903V1070M986 903V1070M187 903V1010M331 903V1010M517 903V1010M673 903V1010M817 903V1010M931 903V1010M123 982H990M123 1045H990"/>
<path d="M120 988L133 976M181 988L194 976M325 988L338 976M511 988L524 976M667 988L680 976M811 988L824 976M925 988L938 976M980 988L993 976M120 1050L133 1038M980 1050L993 1038M557 843L570 832M420 726L433 714M512 726L525 714M420 876L433 864M512 876L525 864"/>
</g>
<path d="M745 760l10 8 6 4" stroke="#e8e83a" stroke-width="3" fill="none"/>
<path d="M355 685H372M915 685H928" stroke="#d8e82a" stroke-width="4"/>
<g fill="none" stroke="#d0141e" stroke-width="5">
<path d="M173 505V606L181 616H193L200 606V505"/><path d="M296 512V606C305 618 318 624 331 624S358 618 368 606V512"/>
<path d="M487 512V606C497 620 507 630 517 630S539 620 549 606V512"/><path d="M650 512V606C655 620 663 625 673 625S690 620 695 606V512"/>
<path d="M793 512V606C800 618 810 630 817 630S834 618 843 606V512"/><path d="M928 505V612M934 505V612"/>
<path d="M391 830V770C405 756 415 751 428 751S450 756 463 770"/><path d="M463 830V812H520V795H463V770"/>
</g>
<g fill="#fff" font-size="30" stroke="#fff" stroke-width=".8">
<text x="137" y="979" textLength="40" lengthAdjust="spacingAndGlyphs">130</text><text x="234" y="979" textLength="40" lengthAdjust="spacingAndGlyphs">325</text><text x="407" y="979" textLength="40" lengthAdjust="spacingAndGlyphs">415</text><text x="581" y="979" textLength="40" lengthAdjust="spacingAndGlyphs">345</text><text x="724" y="979" textLength="40" lengthAdjust="spacingAndGlyphs">320</text><text x="851" y="979" textLength="40" lengthAdjust="spacingAndGlyphs">250</text><text x="939" y="979" textLength="40" lengthAdjust="spacingAndGlyphs">120</text><text x="506" y="1039" textLength="52" lengthAdjust="spacingAndGlyphs">1905</text>
<text x="455" y="724" textLength="40" lengthAdjust="spacingAndGlyphs">200</text><text x="451" y="870" textLength="40" lengthAdjust="spacingAndGlyphs">200</text><text x="469" y="793" textLength="57" lengthAdjust="spacingAndGlyphs">DN32</text>
<text transform="translate(745 576) rotate(-90)" textLength="40" lengthAdjust="spacingAndGlyphs">230</text><text transform="translate(745 718) rotate(-90)" textLength="70" lengthAdjust="spacingAndGlyphs">DN400</text><text transform="translate(558 820) rotate(-90)" textLength="40" lengthAdjust="spacingAndGlyphs">150</text><text transform="translate(385 828) rotate(-90)" textLength="105" lengthAdjust="spacingAndGlyphs">D159X4.5</text>
<text transform="translate(182 430) rotate(-90)" textLength="56" lengthAdjust="spacingAndGlyphs">DN42</text>
<text transform="translate(326 432) rotate(-90)" textLength="100" lengthAdjust="spacingAndGlyphs">D159x4.5</text><text transform="translate(512 432) rotate(-90)" textLength="78" lengthAdjust="spacingAndGlyphs">D133x4</text><text transform="translate(668 432) rotate(-90)" textLength="88" lengthAdjust="spacingAndGlyphs">D89x3.5</text><text transform="translate(812 430) rotate(-90)" textLength="78" lengthAdjust="spacingAndGlyphs">D108x4</text>
<text transform="translate(922 434) rotate(-90)" textLength="70" lengthAdjust="spacingAndGlyphs">D22x3</text>
<g font-weight="700" font-size="24" stroke-width="1.500"><text transform="translate(182 352) rotate(-90)" textLength="90" lengthAdjust="spacingAndGlyphs">温度计套管</text><text transform="translate(922 356) rotate(-90)" textLength="92" lengthAdjust="spacingAndGlyphs">压力表接管</text>
<text x="503" y="50" textLength="130" lengthAdjust="spacingAndGlyphs">冷热水分水器</text></g></g>
<path d="M490 61H648" stroke="#d8141e" stroke-width="4"/>
</g>

<!-- notes -->
<g transform="translate(510 775) scale(.33333)" fill="#fff">
<g font-weight="700" font-size="21" stroke="#fff" stroke-width="1.500">
<text x="44" y="65" textLength="38" lengthAdjust="spacingAndGlyphs">附注</text>
<text x="140" y="65" textLength="405" lengthAdjust="spacingAndGlyphs">冷热水分集水器结构技术要求为 介质 热水 工作压力</text>
<text x="675" y="65" textLength="60" lengthAdjust="spacingAndGlyphs">工作温度</text>
<text x="178" y="124" textLength="495" lengthAdjust="spacingAndGlyphs">本图为压力容器,本图只作取管图,不作加工图,制作按国家标准</text>
<text x="178" y="186" textLength="255" lengthAdjust="spacingAndGlyphs">支架按二个支架加工,支架高度为</text></g>
<g font-size="34">
<text x="118" y="68" textLength="18" lengthAdjust="spacingAndGlyphs">1.</text>
<text x="550" y="68" textLength="110" lengthAdjust="spacingAndGlyphs">1.0MPa,</text>
<text x="738" y="68" textLength="80" lengthAdjust="spacingAndGlyphs">60℃ .</text>
<text x="152" y="128" textLength="22" lengthAdjust="spacingAndGlyphs">2.</text>
<text x="152" y="190" textLength="22" lengthAdjust="spacingAndGlyphs">3.</text>
<text x="436" y="190" textLength="90" lengthAdjust="spacingAndGlyphs">600mm.</text></g>
</g>

<!-- title block -->
<g transform="translate(1150 740) scale(.33333)">
<g fill="none" stroke="#14e01e" stroke-width="3.800">
<path d="M37 394H394M37 448H394M37 502H394M118 556H394M118 340V610M217 340V610M298 340V610M37 778H394M37 824H394M118 734V868M244 734V868M308 734V868"/></g>
<path d="M37 20H394M37 127H394M37 232H394M37 340H394M37 610H394M37 734H394" stroke="#d0141e" stroke-width="3.800" fill="none"/>
<g fill="#fff" font-weight="700" font-size="25" stroke="#fff" stroke-width="1.500">
<text x="43" y="47" textLength="62" lengthAdjust="spacingAndGlyphs">建设单位</text><text x="43" y="267" textLength="62" lengthAdjust="spacingAndGlyphs">工程名称</text><text x="148" y="300" textLength="140" lengthAdjust="spacingAndGlyphs">6号工程设计中心</text>
<text x="45" y="381" textLength="65" lengthAdjust="spacingAndGlyphs">项目编号</text><text x="226" y="381" textLength="64" lengthAdjust="spacingAndGlyphs">结构专业</text>
<text x="46" y="435" textLength="62">核 对</text><text x="219" y="435" textLength="78" lengthAdjust="spacingAndGlyphs">专业 负责人</text>
<text x="46" y="489" textLength="62">审 核</text><text x="226" y="489" textLength="52">校 对</text><text x="226" y="543" textLength="52">绘 图</text><text x="46" y="570" textLength="62">批 准</text>
<text x="44" y="640" textLength="64" lengthAdjust="spacingAndGlyphs">图纸名称</text><text x="80" y="692" textLength="268" lengthAdjust="spacingAndGlyphs">地下一层冷热水分 集水器接管图</text>
<g font-size="24"><text x="45" y="768" textLength="64" lengthAdjust="spacingAndGlyphs">设计阶段</text><text x="153" y="768" textLength="60" lengthAdjust="spacingAndGlyphs">施工图</text><text x="250" y="768" textLength="46">比 例</text><text x="326" y="768" textLength="42" lengthAdjust="spacingAndGlyphs">1:100</text>
<text x="45" y="812" textLength="64">项目号</text><text x="124" y="812" textLength="114" lengthAdjust="spacingAndGlyphs">暖通-HT001-6/4</text><text x="250" y="812" textLength="46">图 号</text><text x="322" y="812" textLength="45" lengthAdjust="spacingAndGlyphs">暖施图</text>
<text x="50" y="858" textLength="56">日 期</text><text x="158" y="858" textLength="50" lengthAdjust="spacingAndGlyphs">2022.4</text><text x="250" y="858" textLength="50">张 数</text><text x="346" y="858">4</text></g></g>
<rect x="142" y="881" width="11" height="20" fill="#fff"/>
</g>

<!-- crosshair/UCS -->
<path d="M1235.500 133V1089" stroke="#f4f4f4" stroke-width="1.100"/>
<rect x="1229.500" y="1037.500" width="12" height="12" fill="#212830" stroke="#fff"/>
<path d="M622.500 1010V1026" stroke="#fff"/>
<g fill="none" stroke="#fff" stroke-width="1.100">
<path d="M56.500 1016V1060M62 1065.500H106M110 1051l14 14M124 1051l-14 14M59 998l6 7 6-7M65 1005v6"/><rect x="52.500" y="1060.500" width="9" height="9"/></g>

<!-- viewcube -->
<circle cx="1221" cy="216" r="52.700" fill="none" stroke="#82868c" stroke-opacity=".36" stroke-width="12"/>
<rect x="1197" y="189" width="51" height="52" fill="#a9a9a9" opacity=".93"/>
<rect x="1206" y="200" width="32" height="30" fill="#8f9398" opacity=".6"/>
<path d="M1207 224.500h30M1222 211h6" stroke="#5d6166" stroke-width="1.300" fill="none"/>
<path d="M1220.500 204v24" stroke="#4d5257" stroke-width="2"/>
<g fill="#8a8e93" font-size="20" font-weight="700" text-anchor="middle"><text x="1222" y="167">北</text><text x="1166" y="224">西</text><text x="1278" y="223">东</text><text x="1222" y="281">南</text></g>
<rect x="1198" y="303" width="48" height="17" rx="5" fill="#9a9da6"/>
<text x="1202" y="315" font-size="11.500" fill="#5d6068">WCS</text><path d="M1234 311h4" stroke="#6c6f77"/>
<rect x="1235" y="133" width="1" height="190" fill="#f4f4f4" opacity=".6"/>

<!-- command line -->
<rect y="1089" width="1341" height="91" fill="#2b333f"/>
<rect y="1089" width="1341" height="3" fill="#3a4350"/>
<rect x="29" y="1092" width="1308" height="29" fill="#c6c6c6"/>
<rect x="29" y="1122" width="1308" height="24" fill="#fff"/>
<rect x="4" y="1092" width="25" height="54" fill="#2b333f"/>
<path d="M8 1096h17M8 1099h17" stroke="#c9ced6" stroke-width="2" stroke-dasharray="2 1"/>
<path d="M11 1108l8 8M19 1108l-8 8" stroke="#d6d9de" stroke-width="2.200"/>
<path d="M9 1142l9-9c-1-4 2-6 5-5l-3 3 2 2 3-3c1 3-1 6-5 5l-9 9z" fill="#d6d9de"/>
<text x="31" y="1114" font-size="15.300" fill="#222" font-family="DejaVu Sans Mono,Liberation Mono,Noto Sans CJK SC,monospace"><tspan font-size="18" font-family="Noto Sans CJK SC,sans-serif">选择注释对象或</tspan><tspan x="167">[</tspan><tspan x="177" font-size="18" font-family="Noto Sans CJK SC,sans-serif">放弃</tspan><tspan x="213">(U)/</tspan><tspan x="253" font-size="18" font-family="Noto Sans CJK SC,sans-serif">模式</tspan><tspan x="289">(M)]:</tspan><tspan x="350">*</tspan><tspan x="360" font-size="18" font-family="Noto Sans CJK SC,sans-serif">取消</tspan><tspan x="396">*</tspan></text>
<rect x="33.500" y="1128.500" width="15" height="11" fill="#eee" stroke="#666"/><rect x="33.500" y="1128.500" width="15" height="3" fill="#777"/><path d="M36 1133l3 2-3 2" stroke="#444" fill="none"/>
<path d="M52 1132h7l-3.500 4z" fill="#666"/>
<text x="67" y="1139" font-size="17" font-style="italic" fill="#9a9a9a">键入命令</text>
<!-- layout tabs -->
<path d="M15 1148l5 12q1 4 5 4h30q3 0 4-4l3-12z" fill="#3c4655"/>
<path d="M64 1148l4 12q1 4 5 4h34q3 0 4-4l5-12z" fill="#323b48"/>
<path d="M120 1148l3 12q1 4 4 4h10q3 0 4-4l3-12z" fill="#323b48"/>
<text x="27" y="1161" font-size="12.500" font-weight="700" fill="#f0f0f0">模型</text>
<text x="74" y="1161" font-size="12.500" fill="#aab1bb">布局1</text>
<path d="M127 1156h9M131.500 1152v9" stroke="#aab1bb" stroke-width="2"/>
<!-- status bar -->
<g fill="#3a4350"><rect x="761" y="1150" width="30" height="23"/><rect x="794" y="1150" width="65" height="23"/><rect x="862" y="1150" width="105" height="23"/><rect x="966" y="1150" width="64" height="23"/><rect x="1032" y="1150" width="22" height="23"/><rect x="1057" y="1150" width="108" height="23"/><rect x="1167" y="1150" width="41" height="23"/><rect x="1209" y="1150" width="22" height="23"/><rect x="1233" y="1150" width="27" height="23"/><rect x="1262" y="1150" width="20" height="23"/><rect x="1286" y="1150" width="24" height="23"/></g>
<rect x="991" y="1150" width="22" height="23" fill="#5f93c6"/><rect x="1059" y="1150" width="22" height="23" fill="#5f93c6"/>
<text x="764" y="1166" font-size="12.500" fill="#d6d9de">模型</text>
<path d="M800 1154v13M805 1154v13M810 1154v13M798 1157h14M798 1161h14M798 1165h14" stroke="#c9ced6" fill="none"/>
<path d="M825 1156h11M825 1160.500h11M825 1165h11" stroke="#c9ced6" stroke-width="2" stroke-dasharray="2 2.500"/>
<use href="#arr" x="850" y="1161"/>
<path d="M866 1153v19h16M866 1166h6v6" stroke="#c9ced6" fill="none"/>
<circle cx="895" cy="1162" r="6.500" fill="none" stroke="#c9ced6" stroke-dasharray="11 3"/><path d="M895 1162l7-7M895 1162h8" stroke="#c9ced6"/><use href="#arr" x="917" y="1161"/>
<path d="M929 1154l12 15" stroke="#d04848"/><path d="M936 1153v7l-3 8" stroke="#5bc06a"/><path d="M930 1161h8" stroke="#c9ced6"/><use href="#arr" x="957" y="1161"/>
<path d="M970 1169l12-12M970 1169h13" stroke="#c9ced6" fill="none"/>
<rect x="995" y="1156" width="13" height="13" fill="none" stroke="#fff"/><rect x="993" y="1153" width="4" height="4" fill="#5f93c6" stroke="#fff"/><use href="#arr" x="1021" y="1161"/>
<path d="M1035 1155h16v2h-16zM1035 1160h11v3h-11zM1035 1166h16v4h-16z" fill="#dfe2e6"/>
<path d="M1070 1153l4 11 4 5-8-4-7 4 3-5z" fill="#fff"/><circle cx="1076" cy="1157" r="2" fill="none" stroke="#fff"/>
<path d="M1090 1154l4 10 4 5-8-4-5 4 2-5zM1095 1152l3 3-3 3-2-3z" fill="#dfe2e6"/>
<path d="M1116 1153l4 11 4 5-8-4-8 4 4-5z" fill="#dfe2e6"/>
<text x="1135" y="1166" font-size="12" fill="#dfe2e6">1:1</text><use href="#arr" x="1156" y="1161"/>
<circle cx="1178" cy="1161" r="5.500" fill="none" stroke="#dfe2e6" stroke-width="3.500"/><circle cx="1178" cy="1161" r="7.500" fill="none" stroke="#dfe2e6" stroke-width="2" stroke-dasharray="3 2.900"/><use href="#arr" x="1199" y="1161"/>
<path d="M1220 1153v16M1212 1161h16" stroke="#dfe2e6" stroke-width="2"/>
<rect x="1240" y="1153" width="7" height="7" fill="none" stroke="#c9ced6"/><circle cx="1253" cy="1158" r="3" fill="none" stroke="#c9ced6"/><path d="M1243 1170l3-6 3 6z" fill="none" stroke="#c9ced6"/>
<path d="M1266 1155l6-3 6 3v4l-6 3-6-3z" fill="#5f93c6"/><rect x="1265" y="1162" width="9" height="8" fill="#e8b63a"/><path d="M1273 1166l3 3 5-6" stroke="#5bc06a" stroke-width="2" fill="none"/>
<rect x="1290.500" y="1155.500" width="15" height="12" fill="none" stroke="#c9ced6"/><path d="M1293 1165l3-3M1303 1158l-3 3" stroke="#c9ced6"/>
<path d="M1315 1155h16M1315 1161h16M1315 1167h16" stroke="#c9ced6" stroke-width="1.800"/>
<!-- window edge -->
<path d="M1 0V1180M1340 0V1180" stroke="#0c6a9a" stroke-width="2.400"/>
<path d="M0 1H1341M0 1179H1341" stroke="#0c6a9a" stroke-width="2"/>
</svg>
</body></html>
